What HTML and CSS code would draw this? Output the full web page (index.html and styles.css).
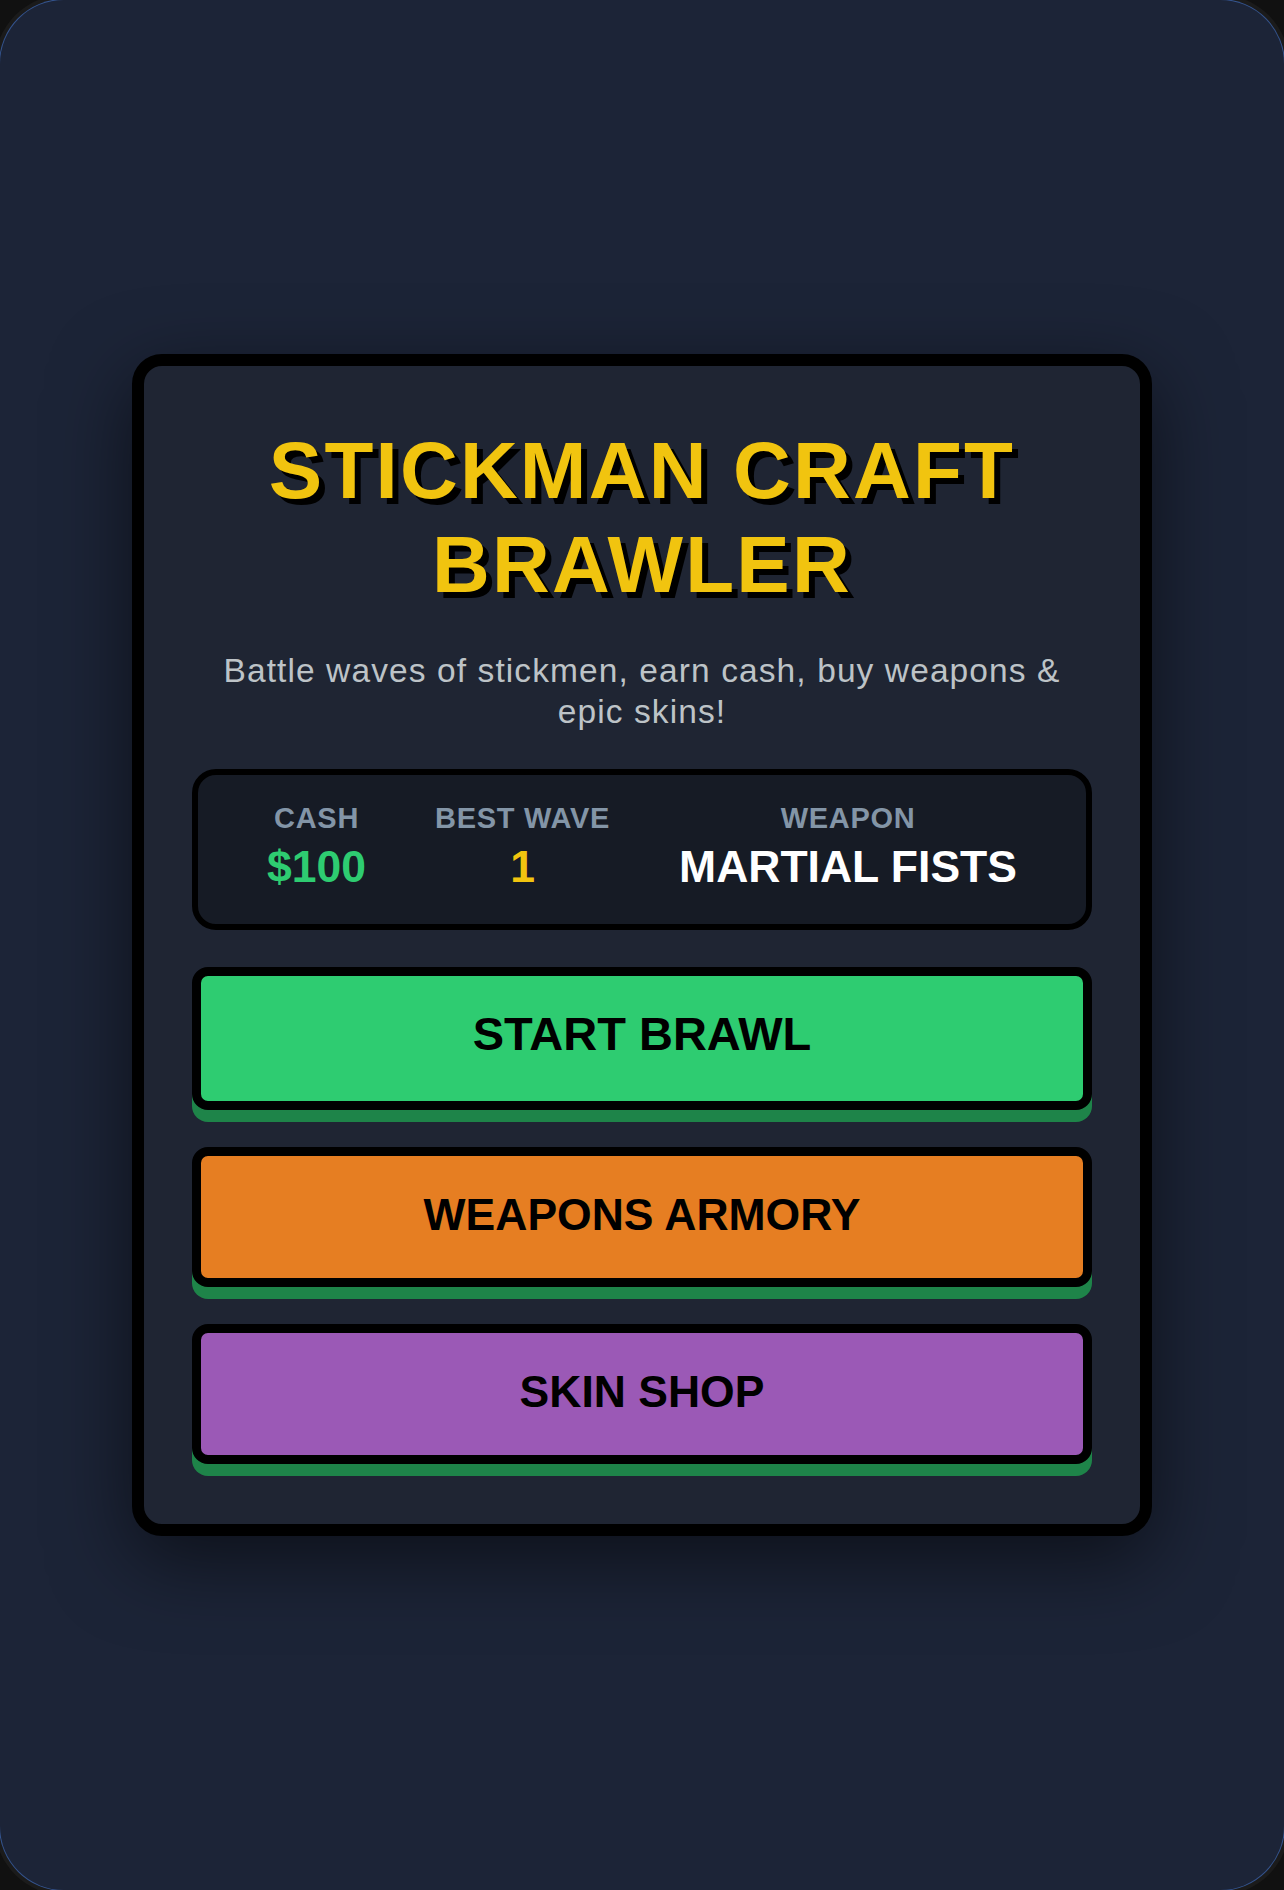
FILE: index.html
```html
<!DOCTYPE html>
<html lang="en">
<head>
<meta charset="utf-8">
<title>Stickman Craft Brawler</title>
<link rel="stylesheet" href="styles.css">
</head>
<body>
<div class="screen">
  <main class="card">
    <h1 class="title">STICKMAN CRAFT<br>BRAWLER</h1>
    <p class="subtitle">Battle waves of stickmen, earn cash, buy weapons &amp; epic skins!</p>
    <section class="stats">
      <div class="stat">
        <span class="stat-label">CASH</span>
        <span class="stat-value cash">$100</span>
      </div>
      <div class="stat">
        <span class="stat-label">BEST WAVE</span>
        <span class="stat-value wave">1</span>
      </div>
      <div class="stat">
        <span class="stat-label">WEAPON</span>
        <span class="stat-value weapon">MARTIAL FISTS</span>
      </div>
    </section>
    <div class="menu">
      <button class="btn btn-start">START BRAWL</button>
      <button class="btn btn-armory">WEAPONS ARMORY</button>
      <button class="btn btn-skins">SKIN SHOP</button>
    </div>
  </main>
</div>
</body>
</html>
```
FILE: styles.css
```css
html, body {
  margin: 0;
  padding: 0;
  background: #111111;
}

body {
  font-family: "Liberation Sans", Arial, sans-serif;
}

.screen {
  width: 1284px;
  height: 1890px;
  box-sizing: border-box;
  border-radius: 64px;
  background: #1c2437;
  box-shadow: 0 0 0 1px #34548f, 0 0 0 5px #1b1b1b;
  display: flex;
  align-items: center;
  justify-content: center;
  overflow: hidden;
}

.card {
  width: 1020px;
  box-sizing: border-box;
  background: #1f2533;
  border: 12px solid #000;
  border-radius: 30px;
  padding: 48px 48px 60px;
  box-shadow: 0 24px 80px rgba(0, 0, 0, 0.55);
  display: flex;
  flex-direction: column;
  align-items: stretch;
}

.title {
  margin: 10px 0 0;
  font-size: 80px;
  line-height: 93.6px;
  font-weight: 700;
  letter-spacing: 2.2px;
  color: #f1c40f;
  text-align: center;
  text-shadow: 6px 6px 0 #000;
}

.subtitle {
  margin: 38px 0 0;
  font-size: 33.5px;
  line-height: 41px;
  letter-spacing: 1.1px;
  color: #bdc3c7;
  text-align: center;
}

.stats {
  margin-top: 37px;
  background: #161b25;
  border: 6px solid #000;
  border-radius: 24px;
  padding: 26px 0 31px;
  display: flex;
  justify-content: space-evenly;
}

.stat {
  display: flex;
  flex-direction: column;
  align-items: center;
  text-align: center;
}

.stat-label {
  font-size: 29px;
  line-height: 34px;
  font-weight: 700;
  letter-spacing: 0.7px;
  color: #8395a7;
}

.stat-value {
  margin-top: 6px;
  font-size: 44.5px;
  line-height: 52px;
  font-weight: 700;
}

.cash { color: #2ecc71; }
.wave { color: #f1c40f; }
.weapon { color: #ffffff; }

.menu {
  margin-top: 37px;
  display: flex;
  flex-direction: column;
  gap: 37px;
}

.btn {
  display: block;
  width: 100%;
  box-sizing: border-box;
  border: 9px solid #000;
  border-radius: 16px;
  padding: 33px 0 38px;
  font-family: "Liberation Sans", Arial, sans-serif;
  font-size: 44.5px;
  line-height: 51px;
  font-weight: 700;
  color: #000;
  text-align: center;
  box-shadow: 0 12px 0 #1e8449;
  cursor: pointer;
}

.btn-start {
  background: #2ecc71;
  font-size: 47px;
  line-height: 54px;
  padding: 31.5px 0 39.5px;
}

.btn-armory {
  background: #e67e22;
}

.btn-skins {
  background: #9b59b6;
}
```
